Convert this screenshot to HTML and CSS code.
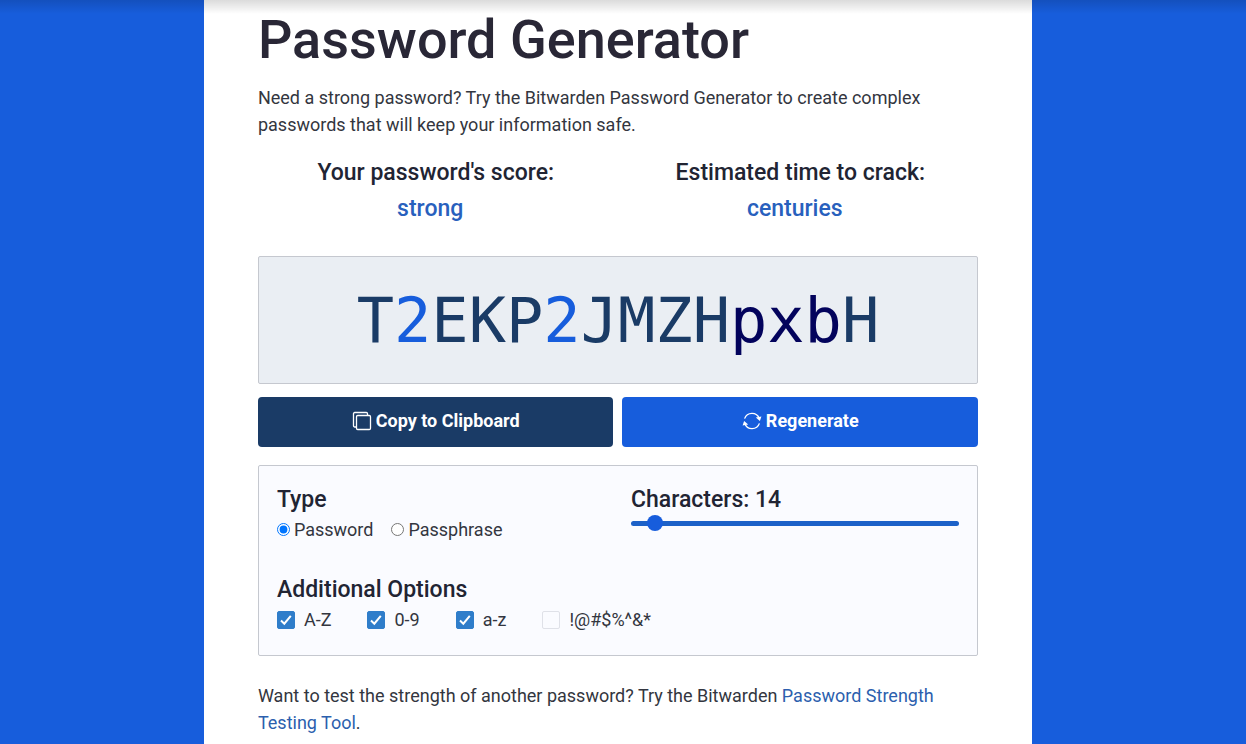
FILE: index.html
```html
<!DOCTYPE html>
<html lang="en">
<head>
  <meta charset="UTF-8" />
  <meta name="viewport" content="width=device-width, initial-scale=1" />
  <title>Password Generator</title>
  <link rel="stylesheet" href="styles.css">
</head>
<body>
  <main class="page">
    <h1>Password Generator</h1>
    <p>Need a strong password? Try the Bitwarden Password Generator to create complex passwords that will keep your information safe.</p>

    <div class="scores">
      <div>
        <h2>Your password's score:</h2>
        <div class="score-value">strong</div>
      </div>
      <div>
        <h2>Estimated time to crack:</h2>
        <div class="score-value">centuries</div>
      </div>
    </div>

    <div class="password">T<span class="digit">2</span>EKP<span class="digit">2</span>JMZH<span class="lower">pxb</span>H</div>

    <div class="buttons">
      <button type="button" class="btn btn-copy">
        <svg width="20" height="20" viewBox="0 0 20 20" fill="none" stroke="currentColor" stroke-width="1.3">
          <path d="M4.5 16H2.7A1.2 1.2 0 0 1 1.5 14.8V2.7A1.2 1.2 0 0 1 2.7 1.5H14.3A1.2 1.2 0 0 1 15.5 2.7V4" />
          <rect x="4.5" y="4.5" width="14" height="14" rx="1.2" />
        </svg>
        Copy to Clipboard
      </button>
      <button type="button" class="btn btn-regenerate">
        <svg width="20" height="20" viewBox="0 0 20 20" fill="none" stroke="currentColor" stroke-width="1.3">
          <path d="M2.6 7.6A7.8 7.8 0 0 1 17.3 7.4M17.4 12.4A7.8 7.8 0 0 1 2.7 12.6" />
          <path d="M13.8 6.6L19.4 5.4L17.9 10ZM6.2 13.4L.6 14.6L2.1 10Z" fill="currentColor" stroke="none" />
        </svg>
        Regenerate
      </button>
    </div>

    <form class="options">
      <div class="options-row">
        <div>
          <h2>Type</h2>
          <div class="radios">
            <label><input type="radio" name="type" checked /> Password</label>
            <label><input type="radio" name="type" /> Passphrase</label>
          </div>
        </div>
        <div>
          <h2><label for="length">Characters: 14</label></h2>
          <input type="range" id="length" class="slider" min="8" max="128" value="14" />
        </div>
      </div>

      <h2>Additional Options</h2>
      <div class="checks">
        <label><input type="checkbox" checked /> A-Z</label>
        <label><input type="checkbox" checked /> 0-9</label>
        <label><input type="checkbox" checked /> a-z</label>
        <label><input type="checkbox" /> !@#$%^&amp;*</label>
      </div>
    </form>

    <p>Want to test the strength of another password? Try the Bitwarden <a href="#">Password Strength Testing Tool</a>.</p>
  </main>
</body>
</html>
```

FILE: styles.css
```css
* {
  box-sizing: border-box;
}

body {
  margin: 0;
  padding-right: 10px;
  background-color: #175ddc;
  color: #333640;
  font-family: Roboto, "Liberation Sans", sans-serif;
  font-size: 18px;
  line-height: 27px;
}

/* shadow of the site header */
body::before {
  content: "";
  position: absolute;
  top: 0;
  left: 0;
  right: 0;
  height: 14px;
  background: linear-gradient(rgba(0, 0, 0, 0.14), rgba(0, 0, 0, 0));
}

.page {
  width: 67%;
  min-height: 100vh;
  margin: 0 auto;
  padding: 8px 54px;
  background-color: #fff;
}

h1 {
  margin: 0 0 12px;
  color: #292736;
  font-size: 54px;
  font-weight: 500;
  line-height: 64px;
}

h2 {
  margin: 0;
  color: #212433;
  font-size: 23px;
  font-weight: 500;
  line-height: 28px;
}

p {
  margin: 0;
}

a {
  color: #2c5fae;
  text-decoration: none;
}

.scores {
  display: grid;
  grid-template-columns: 1fr 1fr;
  gap: 9px;
  margin: 21px 0 33px;
  text-align: center;
}

.score-value {
  margin-top: 8px;
  padding-right: 11px;
  color: #2860bd;
  font-size: 23px;
  font-weight: 500;
  line-height: 28px;
}

.password {
  padding: 26px 18px 24px;
  border: 1px solid #c5c8cf;
  border-radius: 2px;
  background-color: #eaeef3;
  color: #1a3b66;
  font-family: "DejaVu Sans Mono", monospace;
  font-size: 62px;
  line-height: 76px;
  text-align: center;
}

.digit {
  color: #175ddc;
}

.lower {
  color: #03035c;
}

.buttons {
  display: grid;
  grid-template-columns: 1fr 1fr;
  gap: 9px;
  margin: 13px 0 18px;
}

.btn {
  display: flex;
  align-items: center;
  justify-content: center;
  gap: 4px;
  height: 50px;
  padding: 0 0 3px;
  border: none;
  border-radius: 4px;
  color: #fff;
  font-family: inherit;
  font-size: 18px;
  font-weight: 700;
  cursor: pointer;
}

.btn-copy {
  background-color: #1a3b66;
}

.btn-regenerate {
  background-color: #175ddc;
}

.options {
  margin-bottom: 26px;
  padding: 20px 18px 22px;
  border: 1px solid #c5c8cf;
  border-radius: 2px;
  background-color: #fafbff;
}

.options-row {
  display: grid;
  grid-template-columns: 1fr 1fr;
  gap: 26px;
  margin-bottom: 33px;
}

.radios {
  display: flex;
  gap: 18px;
  margin-top: 2px;
}

.radios label {
  display: flex;
  align-items: center;
  gap: 4px;
}

.radios input {
  width: 13px;
  height: 13px;
  margin: 0;
}

.slider {
  display: block;
  width: 100%;
  height: 16px;
  margin: 1px 0 0;
  background: none;
  appearance: none;
}

.slider::-webkit-slider-runnable-track {
  height: 5px;
  border-radius: 3px;
  background-color: #1c61c8;
}

.slider::-webkit-slider-thumb {
  width: 16px;
  height: 16px;
  margin-top: -6px;
  border-radius: 50%;
  background-color: #175ddc;
  appearance: none;
}

.checks {
  display: flex;
  gap: 36px;
  margin-top: 2px;
}

.checks label {
  display: flex;
  align-items: center;
  gap: 9px;
}

.checks input {
  width: 18px;
  height: 18px;
  margin: 0;
  border: 1px solid #dfe1e8;
  border-radius: 2px;
  appearance: none;
}

.checks input:checked {
  border-color: #2f7dca;
  background: #2f7dca url("data:image/svg+xml,%3Csvg xmlns='http://www.w3.org/2000/svg' viewBox='0 0 16 16' fill='none' stroke='white' stroke-width='2'%3E%3Cpath d='M3 8.5L6.3 11.7L12.8 3.8'/%3E%3C/svg%3E") center / 16px no-repeat;
}
```
